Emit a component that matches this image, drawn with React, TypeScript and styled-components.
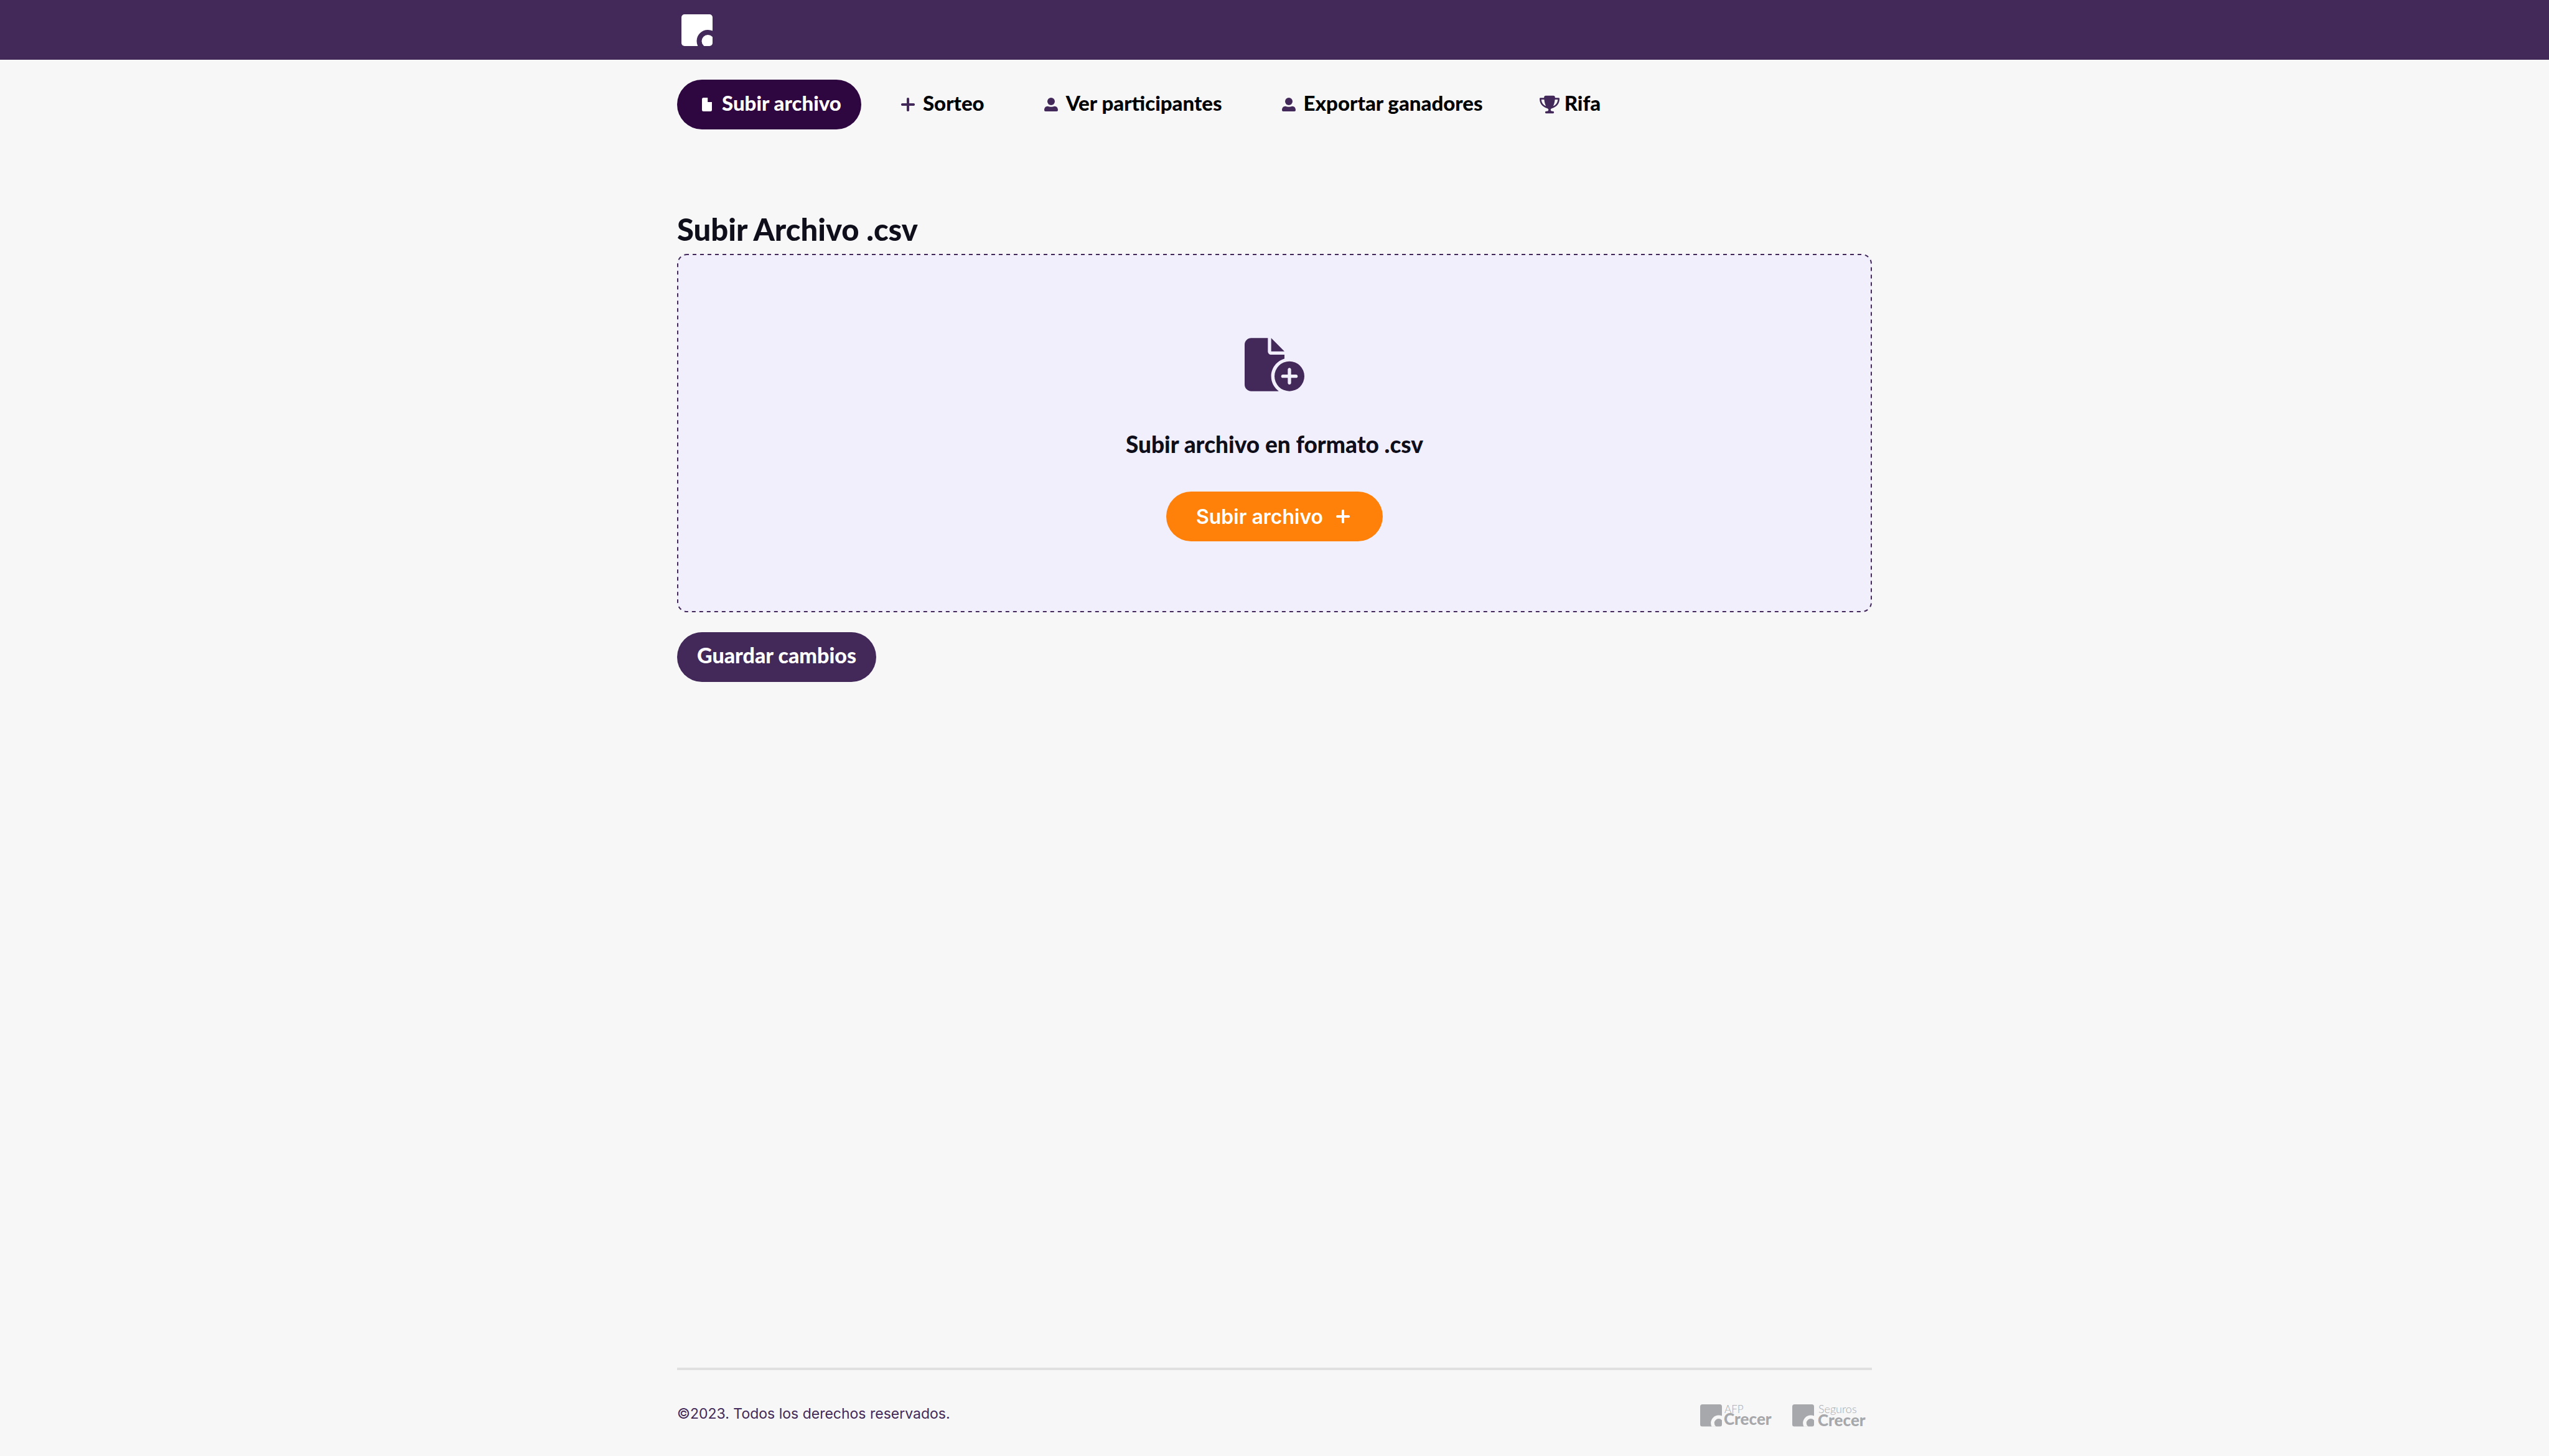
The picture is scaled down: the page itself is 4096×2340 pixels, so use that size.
import React from 'react';
import styled, { createGlobalStyle, css } from 'styled-components';
import { FaFileCirclePlus, FaTrophy } from 'react-icons/fa6';

const color = {
  page: '#f7f7f7',
  purple: '#422959',
  deep: '#2e0640',
  lilac: '#f2effd',
  orange: '#ff810a',
  ink: '#0f0e1b',
  line: '#e0e0e0',
  grey: '#a7a8ac',
};

const display = '"Lato", "Open Sans", sans-serif';
const body = '"Inter", "Open Sans", sans-serif';

const GlobalStyle = createGlobalStyle`
  *, *::before, *::after { box-sizing: border-box; }
  body { margin: 0; background: ${color.page}; color: ${color.ink}; font-family: ${display}; }
  button { font: inherit; border: 0; cursor: pointer; }
`;

const Page = styled.div`
  display: flex;
  flex-direction: column;
  min-height: 100vh;
`;

const Container = styled.div`
  width: 100%;
  max-width: 1920px;
  margin: 0 auto;
`;

const Header = styled.header`
  background: ${color.purple};
  padding: 16px 0;
`;

const HomeLink = styled.a`
  display: block;
  width: 64px;
  height: 64px;
`;

const Nav = styled.nav`
  display: flex;
  gap: 27px;
  padding-top: 32px;
`;

const pill = css`
  display: inline-flex;
  align-items: center;
  height: 80px;
  border-radius: 40px;
  white-space: nowrap;
`;

const Tab = styled.a<{ $active?: boolean }>`
  ${pill}
  gap: 8px;
  padding: 0 32px;
  font-size: 33px;
  font-weight: 900;
  text-decoration: none;
  background: ${(p) => (p.$active ? color.deep : 'transparent')};
  color: ${(p) => (p.$active ? '#fff' : '#000')};

  svg {
    width: 32px;
    height: 32px;
    color: ${(p) => (p.$active ? '#fff' : color.purple)};
  }
`;

const Label = styled.span`
  line-height: 40px;
  padding-bottom: 6px;
`;

const Main = styled.main`
  flex: 1;
  padding-top: 132px;
`;

const Title = styled.h1`
  margin: 0 0 12px;
  font-size: 49px;
  line-height: 56px;
  font-weight: 900;
`;

const DropZone = styled.section`
  position: relative;
  display: flex;
  flex-direction: column;
  align-items: center;
  padding: 114px 32px;
  border-radius: 16px;
  background: ${color.lilac};
`;

const DashedOutline = styled.svg`
  position: absolute;
  inset: 0;
  width: 100%;
  height: 100%;
  pointer-events: none;

  rect {
    x: 1px;
    y: 1px;
    width: calc(100% - 2px);
    height: calc(100% - 2px);
    rx: 15px;
    fill: none;
    stroke: ${color.purple};
    stroke-width: 2px;
    stroke-dasharray: 6 6;
    stroke-dashoffset: 3px;
  }
`;

const FileBadge = styled.div`
  display: flex;
  align-items: center;
  justify-content: center;
  width: 128px;
  height: 128px;
  color: ${color.purple};

  svg {
    width: 96px;
    height: 86px;
  }
`;

const Hint = styled.h2`
  margin: 42px 0 54px;
  font-size: 37px;
  line-height: 44px;
  font-weight: 900;
`;

const UploadButton = styled.button`
  && {
    ${pill}
    gap: 16px;
    padding: 0 48px;
    background: ${color.orange};
    color: #fff;
    font-family: ${body};
    font-size: 32px;
    font-weight: 600;
  }

  svg {
    width: 32px;
    height: 32px;
  }
`;

const SaveButton = styled.button`
  && {
    ${pill}
    margin-top: 32px;
    padding: 0 32px;
    background: ${color.purple};
    color: #fff;
    font-size: 34px;
    font-weight: 900;
  }
`;

const Footer = styled.footer`
  display: flex;
  align-items: center;
  justify-content: space-between;
  height: 142px;
  padding: 2px 8px 0 0;
  border-top: 4px solid ${color.line};
`;

const Copyright = styled.p`
  margin: 0;
  font-family: ${body};
  font-size: 23px;
  line-height: 32px;
  color: ${color.purple};
`;

const Brands = styled.div`
  display: flex;
  gap: 28px;

  svg {
    display: block;
    width: 120px;
    height: 56px;
  }
`;

const Mark = ({ id, fill, ring }: { id: string; fill: string; ring: string }) => (
  <>
    <clipPath id={id}>
      <rect width="50" height="51" rx="5" />
    </clipPath>
    <g clipPath={`url(#${id})`}>
      <rect width="50" height="51" fill={fill} />
      <circle cx="42.5" cy="43" r="14" fill="none" stroke={ring} strokeWidth="8" />
    </g>
  </>
);

const FileIcon = () => (
  <svg viewBox="-8 -5 32 32" fill="currentColor" aria-hidden="true">
    <path d="M2.5 0H9.2V7H16V19.5A2.5 2.5 0 0 1 13.5 22H2.5A2.5 2.5 0 0 1 0 19.5V2.5A2.5 2.5 0 0 1 2.5 0Z" />
  </svg>
);

const PlusIcon = () => (
  <svg viewBox="-5 -5 32 32" fill="currentColor" aria-hidden="true">
    <rect x="9" width="4" height="22" rx="1.7" />
    <rect y="9" width="22" height="4" rx="1.7" />
  </svg>
);

const UserIcon = () => (
  <svg viewBox="-5 -5 32 32" fill="currentColor" aria-hidden="true">
    <circle cx="11" cy="6" r="6" />
    <path d="M5.5 13.7C9 15 13 15 16.5 13.7C20 13.7 22 16.5 22 20A2 2 0 0 1 20 22H2A2 2 0 0 1 0 20C0 16.5 2 13.7 5.5 13.7Z" />
  </svg>
);

const BrandLogo = ({ id, name, textX, topSize, baseline }: {
  id: string; name: string; textX: number; topSize: number; baseline: number;
}) => (
  <svg viewBox="0 -3 120 56" role="img" aria-label={`${name} Crecer`}>
    <g transform="translate(0 10) scale(0.7)">
      <Mark id={id} fill={color.grey} ring={color.page} />
    </g>
    <g fill={color.grey} fontFamily={display}>
      <text x={textX} y="24" fontSize={topSize} fontWeight="300">{name}</text>
      <text x={textX - 1} y={baseline} fontSize="26" fontWeight="900">Crecer</text>
    </g>
  </svg>
);

const tabs = [
  { label: 'Subir archivo', icon: <FileIcon />, active: true },
  { label: 'Sorteo', icon: <PlusIcon /> },
  { label: 'Ver participantes', icon: <UserIcon /> },
  { label: 'Exportar ganadores', icon: <UserIcon /> },
  { label: 'Rifa', icon: <FaTrophy aria-hidden="true" /> },
];

export default function App() {
  return (
    <Page>
      <GlobalStyle />
      <Header>
        <Container>
          <HomeLink href="#" aria-label="Crecer">
            <svg viewBox="0 0 64 64" width="64" height="64" aria-hidden="true">
              <g transform="translate(7 7)">
                <Mark id="mark-header" fill="#fff" ring={color.purple} />
              </g>
            </svg>
          </HomeLink>
        </Container>
      </Header>
      <Container>
        <Nav>
          {tabs.map((t) => (
            <Tab key={t.label} href="#" $active={t.active} aria-current={t.active ? 'page' : undefined}>
              {t.icon}
              <Label>{t.label}</Label>
            </Tab>
          ))}
        </Nav>
      </Container>
      <Main>
        <Container>
          <Title>Subir Archivo .csv</Title>
          <DropZone>
            <DashedOutline aria-hidden="true">
              <rect />
            </DashedOutline>
            <FileBadge>
              <FaFileCirclePlus aria-hidden="true" />
            </FileBadge>
            <Hint>Subir archivo en formato .csv</Hint>
            <UploadButton type="button">
              Subir archivo
              <PlusIcon />
            </UploadButton>
          </DropZone>
          <SaveButton type="button">
            <Label>Guardar cambios</Label>
          </SaveButton>
        </Container>
      </Main>
      <Container>
        <Footer>
          <Copyright>©2023. Todos los derechos reservados.</Copyright>
          <Brands>
            <BrandLogo id="mark-afp" name="AFP" textX={39} topSize={17} baseline={43} />
            <BrandLogo id="mark-seguros" name="Seguros" textX={42} topSize={18} baseline={45} />
          </Brands>
        </Footer>
      </Container>
    </Page>
  );
}
